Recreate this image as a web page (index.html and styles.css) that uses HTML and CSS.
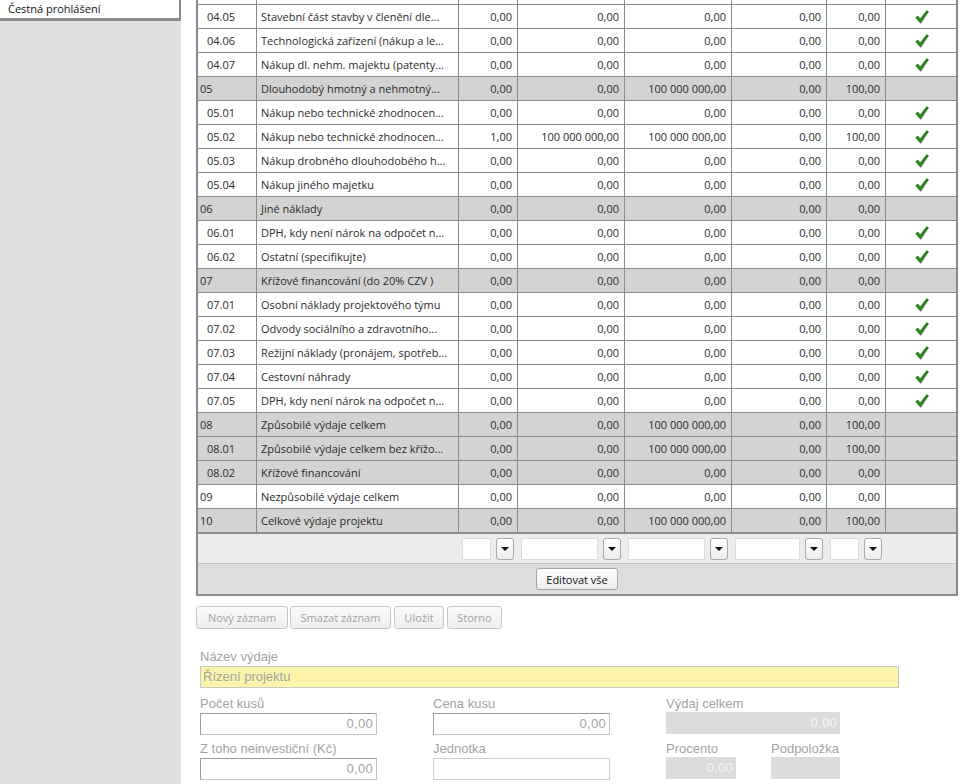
FILE: index.html
```html
<!DOCTYPE html>
<html lang="cs">
<head>
<meta charset="utf-8">
<title>Rozpočet</title>
<link rel="stylesheet" href="styles.css">
</head>
<body>
<div class="page">
  <aside class="sidebar">
    <div class="side-item">Čestná prohlášení</div>
  </aside>
  <main class="main">
    <div class="grid">
      <div class="row top"><div class="c"></div><div class="c"></div><div class="c"></div><div class="c"></div><div class="c"></div><div class="c"></div><div class="c"></div><div class="c"></div></div>

      <div class="row"><div class="c code sub">04.05</div><div class="c name">Stavební část stavby v členění dle...</div><div class="c num">0,00</div><div class="c num">0,00</div><div class="c num">0,00</div><div class="c num">0,00</div><div class="c num">0,00</div><div class="c chk"><svg viewBox="0 0 14 14" class="tick"><path d="M0.8 7.6 L2.9 6 L5.2 8.9 L11.9 0.6 L13.4 1.7 L5.6 13.2 Z"/></svg></div></div>
      <div class="row"><div class="c code sub">04.06</div><div class="c name">Technologická zařízení (nákup a le...</div><div class="c num">0,00</div><div class="c num">0,00</div><div class="c num">0,00</div><div class="c num">0,00</div><div class="c num">0,00</div><div class="c chk"><svg viewBox="0 0 14 14" class="tick"><path d="M0.8 7.6 L2.9 6 L5.2 8.9 L11.9 0.6 L13.4 1.7 L5.6 13.2 Z"/></svg></div></div>
      <div class="row"><div class="c code sub">04.07</div><div class="c name">Nákup dl. nehm. majektu (patenty...</div><div class="c num">0,00</div><div class="c num">0,00</div><div class="c num">0,00</div><div class="c num">0,00</div><div class="c num">0,00</div><div class="c chk"><svg viewBox="0 0 14 14" class="tick"><path d="M0.8 7.6 L2.9 6 L5.2 8.9 L11.9 0.6 L13.4 1.7 L5.6 13.2 Z"/></svg></div></div>
      <div class="row grey"><div class="c code">05</div><div class="c name">Dlouhodobý hmotný a nehmotný...</div><div class="c num">0,00</div><div class="c num">0,00</div><div class="c num">100 000 000,00</div><div class="c num">0,00</div><div class="c num">100,00</div><div class="c chk"></div></div>
      <div class="row"><div class="c code sub">05.01</div><div class="c name">Nákup nebo technické zhodnocen...</div><div class="c num">0,00</div><div class="c num">0,00</div><div class="c num">0,00</div><div class="c num">0,00</div><div class="c num">0,00</div><div class="c chk"><svg viewBox="0 0 14 14" class="tick"><path d="M0.8 7.6 L2.9 6 L5.2 8.9 L11.9 0.6 L13.4 1.7 L5.6 13.2 Z"/></svg></div></div>
      <div class="row"><div class="c code sub">05.02</div><div class="c name">Nákup nebo technické zhodnocen...</div><div class="c num">1,00</div><div class="c num">100 000 000,00</div><div class="c num">100 000 000,00</div><div class="c num">0,00</div><div class="c num">100,00</div><div class="c chk"><svg viewBox="0 0 14 14" class="tick"><path d="M0.8 7.6 L2.9 6 L5.2 8.9 L11.9 0.6 L13.4 1.7 L5.6 13.2 Z"/></svg></div></div>
      <div class="row"><div class="c code sub">05.03</div><div class="c name">Nákup drobného dlouhodobého h...</div><div class="c num">0,00</div><div class="c num">0,00</div><div class="c num">0,00</div><div class="c num">0,00</div><div class="c num">0,00</div><div class="c chk"><svg viewBox="0 0 14 14" class="tick"><path d="M0.8 7.6 L2.9 6 L5.2 8.9 L11.9 0.6 L13.4 1.7 L5.6 13.2 Z"/></svg></div></div>
      <div class="row"><div class="c code sub">05.04</div><div class="c name">Nákup jiného majetku</div><div class="c num">0,00</div><div class="c num">0,00</div><div class="c num">0,00</div><div class="c num">0,00</div><div class="c num">0,00</div><div class="c chk"><svg viewBox="0 0 14 14" class="tick"><path d="M0.8 7.6 L2.9 6 L5.2 8.9 L11.9 0.6 L13.4 1.7 L5.6 13.2 Z"/></svg></div></div>
      <div class="row grey"><div class="c code">06</div><div class="c name">Jiné náklady</div><div class="c num">0,00</div><div class="c num">0,00</div><div class="c num">0,00</div><div class="c num">0,00</div><div class="c num">0,00</div><div class="c chk"></div></div>
      <div class="row"><div class="c code sub">06.01</div><div class="c name">DPH, kdy není nárok na odpočet n...</div><div class="c num">0,00</div><div class="c num">0,00</div><div class="c num">0,00</div><div class="c num">0,00</div><div class="c num">0,00</div><div class="c chk"><svg viewBox="0 0 14 14" class="tick"><path d="M0.8 7.6 L2.9 6 L5.2 8.9 L11.9 0.6 L13.4 1.7 L5.6 13.2 Z"/></svg></div></div>
      <div class="row"><div class="c code sub">06.02</div><div class="c name">Ostatní (specifikujte)</div><div class="c num">0,00</div><div class="c num">0,00</div><div class="c num">0,00</div><div class="c num">0,00</div><div class="c num">0,00</div><div class="c chk"><svg viewBox="0 0 14 14" class="tick"><path d="M0.8 7.6 L2.9 6 L5.2 8.9 L11.9 0.6 L13.4 1.7 L5.6 13.2 Z"/></svg></div></div>
      <div class="row grey"><div class="c code">07</div><div class="c name">Křížové financování (do 20% CZV )</div><div class="c num">0,00</div><div class="c num">0,00</div><div class="c num">0,00</div><div class="c num">0,00</div><div class="c num">0,00</div><div class="c chk"></div></div>
      <div class="row"><div class="c code sub">07.01</div><div class="c name">Osobní náklady projektového týmu</div><div class="c num">0,00</div><div class="c num">0,00</div><div class="c num">0,00</div><div class="c num">0,00</div><div class="c num">0,00</div><div class="c chk"><svg viewBox="0 0 14 14" class="tick"><path d="M0.8 7.6 L2.9 6 L5.2 8.9 L11.9 0.6 L13.4 1.7 L5.6 13.2 Z"/></svg></div></div>
      <div class="row"><div class="c code sub">07.02</div><div class="c name">Odvody sociálního a zdravotního...</div><div class="c num">0,00</div><div class="c num">0,00</div><div class="c num">0,00</div><div class="c num">0,00</div><div class="c num">0,00</div><div class="c chk"><svg viewBox="0 0 14 14" class="tick"><path d="M0.8 7.6 L2.9 6 L5.2 8.9 L11.9 0.6 L13.4 1.7 L5.6 13.2 Z"/></svg></div></div>
      <div class="row"><div class="c code sub">07.03</div><div class="c name">Režijní náklady (pronájem, spotřeb...</div><div class="c num">0,00</div><div class="c num">0,00</div><div class="c num">0,00</div><div class="c num">0,00</div><div class="c num">0,00</div><div class="c chk"><svg viewBox="0 0 14 14" class="tick"><path d="M0.8 7.6 L2.9 6 L5.2 8.9 L11.9 0.6 L13.4 1.7 L5.6 13.2 Z"/></svg></div></div>
      <div class="row"><div class="c code sub">07.04</div><div class="c name">Cestovní náhrady</div><div class="c num">0,00</div><div class="c num">0,00</div><div class="c num">0,00</div><div class="c num">0,00</div><div class="c num">0,00</div><div class="c chk"><svg viewBox="0 0 14 14" class="tick"><path d="M0.8 7.6 L2.9 6 L5.2 8.9 L11.9 0.6 L13.4 1.7 L5.6 13.2 Z"/></svg></div></div>
      <div class="row"><div class="c code sub">07.05</div><div class="c name">DPH, kdy není nárok na odpočet n...</div><div class="c num">0,00</div><div class="c num">0,00</div><div class="c num">0,00</div><div class="c num">0,00</div><div class="c num">0,00</div><div class="c chk"><svg viewBox="0 0 14 14" class="tick"><path d="M0.8 7.6 L2.9 6 L5.2 8.9 L11.9 0.6 L13.4 1.7 L5.6 13.2 Z"/></svg></div></div>
      <div class="row grey"><div class="c code">08</div><div class="c name">Způsobilé výdaje celkem</div><div class="c num">0,00</div><div class="c num">0,00</div><div class="c num">100 000 000,00</div><div class="c num">0,00</div><div class="c num">100,00</div><div class="c chk"></div></div>
      <div class="row grey"><div class="c code sub">08.01</div><div class="c name">Způsobilé výdaje celkem bez křížo...</div><div class="c num">0,00</div><div class="c num">0,00</div><div class="c num">100 000 000,00</div><div class="c num">0,00</div><div class="c num">100,00</div><div class="c chk"></div></div>
      <div class="row grey"><div class="c code sub">08.02</div><div class="c name">Křížové financování</div><div class="c num">0,00</div><div class="c num">0,00</div><div class="c num">0,00</div><div class="c num">0,00</div><div class="c num">0,00</div><div class="c chk"></div></div>
      <div class="row"><div class="c code">09</div><div class="c name">Nezpůsobilé výdaje celkem</div><div class="c num">0,00</div><div class="c num">0,00</div><div class="c num">0,00</div><div class="c num">0,00</div><div class="c num">0,00</div><div class="c chk"></div></div>
      <div class="row grey last"><div class="c code">10</div><div class="c name">Celkové výdaje projektu</div><div class="c num">0,00</div><div class="c num">0,00</div><div class="c num">100 000 000,00</div><div class="c num">0,00</div><div class="c num">100,00</div><div class="c chk"></div></div>

      <div class="filter-row">
        <div></div><div></div>
        <div class="fcell"><span class="finput"></span><span class="fbtn"><i class="tri"></i></span></div>
        <div class="fcell"><span class="finput"></span><span class="fbtn"><i class="tri"></i></span></div>
        <div class="fcell"><span class="finput"></span><span class="fbtn"><i class="tri"></i></span></div>
        <div class="fcell"><span class="finput"></span><span class="fbtn"><i class="tri"></i></span></div>
        <div class="fcell"><span class="finput"></span><span class="fbtn"><i class="tri"></i></span></div>
        <div></div>
      </div>
      <div class="edit-row"><button class="edit-btn">Editovat vše</button></div>
    </div>

    <div class="actions">
      <button class="act w1">Nový záznam</button>
      <button class="act w2">Smazat záznam</button>
      <button class="act w3">Uložit</button>
      <button class="act w4">Storno</button>
    </div>

    <div class="form">
      <div class="frow r1">
        <div class="field wide">
          <div class="lbl">Název výdaje</div>
          <div class="inp yellow">Řízení projektu</div>
        </div>
      </div>
      <div class="frow r2">
        <div class="field f1">
          <div class="lbl">Počet kusů</div>
          <div class="inp bord num-v">0,00</div>
        </div>
        <div class="field f2">
          <div class="lbl">Cena kusu</div>
          <div class="inp bord num-v">0,00</div>
        </div>
        <div class="field f3">
          <div class="lbl">Výdaj celkem</div>
          <div class="inp greyf num-v">0,00</div>
        </div>
      </div>
      <div class="frow r3">
        <div class="field f1">
          <div class="lbl">Z toho neinvestiční (Kč)</div>
          <div class="inp bord num-v">0,00</div>
        </div>
        <div class="field f2">
          <div class="lbl">Jednotka</div>
          <div class="inp light"></div>
        </div>
        <div class="field f4">
          <div class="lbl">Procento</div>
          <div class="inp greyf num-v">0,00</div>
        </div>
        <div class="field f5">
          <div class="lbl">Podpoložka</div>
          <div class="inp greyf"></div>
        </div>
      </div>
    </div>
  </main>
</div>
</body>
</html>
```

FILE: styles.css
```css
* { box-sizing: border-box; }
html, body { margin: 0; padding: 0; background: #fff; }
body {
  font-family: "Open Sans", "Noto Sans", sans-serif;
  font-size: 11px;
  color: #2b2b2b;
}
.page { display: flex; min-height: 784px; }

.sidebar { width: 181px; background: #e0e0e0; flex: none; }
.side-item {
  background: #fff;
  height: 21px;
  line-height: 18px;
  padding-left: 8px;
  color: #111;
  border-right: 2px solid #8a8a8a;
  border-bottom: 3px solid #8a8a8a;
}

.main { padding-left: 15px; width: 777px; }

.grid {
  width: 762px;
  border-left: 2px solid #8a8a8a;
  border-right: 2px solid #8a8a8a;
  border-bottom: 2px solid #8a8a8a;
}
.row {
  display: grid;
  grid-template-columns: 59px 202px 59px 107px 107px 95px 59px 70px;
  height: 24px;
  border-bottom: 1px solid #8c8c8c;
  background: #fff;
}
.row.top { height: 5px; }
.row.grey { background: #d3d3d3; }
.row.last { height: 25px; border-bottom-width: 2px; }
.c {
  border-right: 1px solid #8c8c8c;
  line-height: 23px;
  white-space: nowrap;
  overflow: hidden;
}
.c:last-child { border-right: none; }
.code { padding-left: 2px; }
.code.sub { padding-left: 9px; }
.name { padding-left: 4px; }
.num { text-align: right; padding-right: 5px; }
.chk { display: flex; align-items: center; justify-content: center; padding-left: 1px; }
.tick { width: 14px; height: 14px; display: block; }
.tick path { fill: #2f8f1f; stroke: #1b5a10; stroke-width: 0.7; stroke-linejoin: round; }

.filter-row {
  display: grid;
  grid-template-columns: 59px 202px 59px 107px 107px 95px 59px 70px;
  height: 30px;
  background: #ececec;
  border-bottom: 1px solid #c4c4c4;
}
.fcell { display: flex; gap: 5px; padding: 4px 4px 0 3px; }
.finput {
  flex: 1;
  height: 22px;
  background: #fff;
  border: 1px solid #dcdcdc;
}
.fbtn {
  width: 18px;
  height: 22px;
  flex: none;
  border: 1px solid #a9a9a9;
  border-radius: 3px;
  background: linear-gradient(#ffffff, #ececec);
  display: flex;
  align-items: center;
  justify-content: center;
}
.tri {
  width: 0; height: 0;
  border-left: 4px solid transparent;
  border-right: 4px solid transparent;
  border-top: 4px solid #111;
}

.edit-row {
  height: 30px;
  background: #dedede;
  display: flex;
  align-items: center;
  justify-content: center;
}
.edit-btn {
  font: inherit;
  color: #111;
  height: 22px;
  width: 82px;
  padding: 0;
  border: 1px solid #a8a8a8;
  border-radius: 3px;
  background: linear-gradient(#ffffff, #ededed);
}

.actions { display: flex; gap: 3px; margin-top: 10px; }
.act {
  font: inherit;
  color: #a3a3a3;
  height: 23px;
  padding: 0;
  border: 1px solid #c6c6c6;
  border-radius: 3px;
  background: linear-gradient(#fbfbfb, #eeeeee);
}
.w1 { width: 92px; margin-right: -1px; }
.w2 { width: 101px; }
.w3 { width: 50px; }
.w4 { width: 55px; }

.form {
  padding-left: 4px;
  margin-top: 19px;
  font-family: "Liberation Sans", Arial, sans-serif;
  font-size: 13px;
  color: #a3a3a3;
}
.frow { display: flex; }
.r2 { margin-top: 7px; }
.r3 { margin-top: 5px; }
.lbl { height: 18px; line-height: 18px; }
.inp {
  height: 22px;
  line-height: 20px;
  padding: 0 3px;
  white-space: nowrap;
}
.num-v { text-align: right; letter-spacing: 0.3px; }
.wide { width: 699px; }
.yellow { background: #fbf4aa; border: 1px solid #c9c9c9; padding-left: 2px; }
.bord { border: 1px solid #9d9d9d; border-right-color: #c4c4c4; border-bottom-color: #c4c4c4; }
.light { border: 1px solid #cfcfcf; }
.greyf { background: #dcdcdc; color: #f7f7f7; line-height: 22px; }
.f1 { width: 177px; }
.f2 { width: 177px; margin-left: 56px; }
.f3 { width: 174px; margin-left: 56px; }
.f3 .lbl, .f4 .lbl, .f5 .lbl { height: 17px; line-height: 17px; }
.f4 { width: 70px; margin-left: 56px; }
.f5 { width: 69px; margin-left: 35px; }
```
